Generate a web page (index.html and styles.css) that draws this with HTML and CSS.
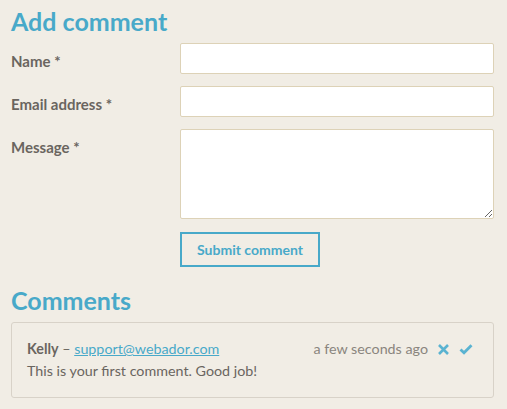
FILE: index.html
```html
<!DOCTYPE html>
<html>
<head>
<meta charset="utf-8">
<link rel="stylesheet" href="styles.css">
</head>
<body>
<main class="page">
  <h2 class="title">Add comment</h2>
  <form class="form">
    <label class="label" for="name">Name *</label>
    <input class="field" id="name" type="text">
    <label class="label" for="email">Email address *</label>
    <input class="field" id="email" type="text">
    <label class="label" for="msg">Message *</label>
    <textarea class="field area" id="msg"></textarea>
    <span></span>
    <div><button class="submit" type="button">Submit comment</button></div>
  </form>
  <h2 class="title comments-title">Comments</h2>
  <div class="comment">
    <div class="comment-head">
      <div class="author"><b>Kelly</b> – <a href="#" class="mail">support@webador.com</a></div>
      <div class="meta">
        <span class="time">a few seconds ago</span>
        <svg class="icon" width="13" height="13" viewBox="0 0 13 13"><path d="M2 2 L11 11 M11 2 L2 11" stroke="#5ab3d1" stroke-width="2.6" stroke-linecap="butt"/></svg>
        <svg class="icon" width="14" height="12" viewBox="0 0 14 12"><path d="M1.5 6.5 L5 9.8 L12.5 2.2" stroke="#5ab3d1" stroke-width="2.8" fill="none" stroke-linejoin="miter"/></svg>
      </div>
    </div>
    <p class="text">This is your first comment. Good job!</p>
  </div>
</main>
</body>
</html>
```
FILE: styles.css
```css
html, body {
  margin: 0;
  padding: 0;
  background: #f1ede5;
}
body {
  font-family: "Lato", "Open Sans", sans-serif;
  color: #6a655f;
}
.page {
  padding: 6px 13px 0 11px;
}
.title {
  margin: 0;
  font-size: 25px;
  font-weight: 700;
  color: #48a9c9;
  line-height: 30px;
}
.form {
  display: grid;
  grid-template-columns: 169px 1fr;
  row-gap: 12px;
  margin-top: 7px;
}
.label {
  font-size: 15px;
  font-weight: 700;
  color: #6a655f;
  padding-top: 8px;
  line-height: 20px;
}
.field {
  box-sizing: border-box;
  height: 31px;
  width: 100%;
  margin: 0;
  border: 1px solid #ddd2b7;
  border-radius: 2px;
  background: #fff;
  font: inherit;
}
.area {
  height: 90px;
  resize: vertical;
  display: block;
}
.submit {
  margin-top: 1px;
  box-sizing: border-box;
  height: 35px;
  width: 140px;
  border: 2px solid #48a9c9;
  background: transparent;
  color: #48a9c9;
  font-family: inherit;
  font-size: 14px;
  font-weight: 700;
  border-radius: 0;
  padding: 0;
}
.comments-title {
  margin-top: 18px;
}
.comment {
  margin-top: 7px;
  border: 1px solid #d8d2c8;
  border-radius: 3px;
  padding: 15px 16px 15px 15px;
  font-size: 14.3px;
  line-height: 22px;
}
.comment-head {
  display: flex;
  justify-content: space-between;
  align-items: center;
}
.author b {
  font-weight: 700;
}
.mail {
  color: #48a9c9;
}
.meta {
  display: flex;
  align-items: center;
  gap: 9px;
  padding-right: 4px;
}
.time {
  color: #8a857e;
}
.text {
  margin: 0;
}
```
